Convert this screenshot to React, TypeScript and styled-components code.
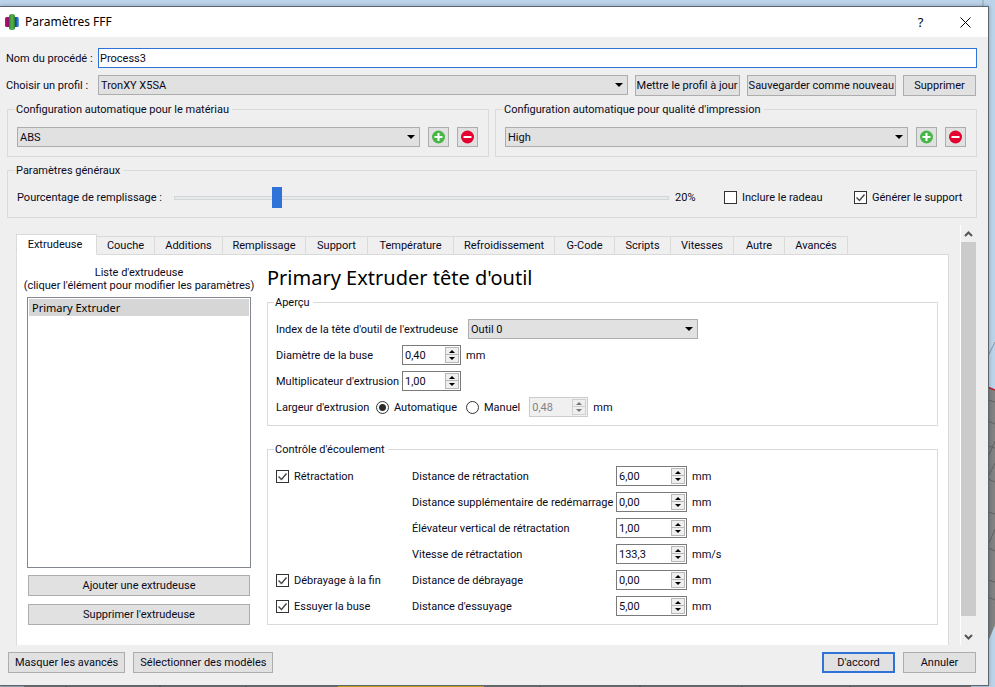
import React, { useEffect, useRef, useState } from "react";
import styled, { createGlobalStyle, css } from "styled-components";

const color = {
  face: "#efefef",
  button: "#e1e1e1",
  edge: "#adadad",
  groove: "#dadada",
  accent: "#2f73d8",
  field: "#7a7a7a",
  text: "#0a0a1c",
};

const uiFont = `Roboto, "Liberation Sans", sans-serif`;
const titleFont = `"Noto Sans", "Open Sans", sans-serif`;

const GlobalStyle = createGlobalStyle`
  *, *::before, *::after { box-sizing: border-box; }
  body {
    margin: 0;
    background: #b9d1e6;
    color: ${color.text};
    font: 11px/13px ${uiFont};
  }
  button, input, select { font: inherit; color: inherit; margin: 0; }
`;

/* ---------- Window frame ---------- */

const Desktop = styled.div`
  position: relative;
  display: flex;
  min-height: 100vh;
  padding: 6px 6px 1px 0;
`;

const Scene = styled.svg`
  position: absolute;
  inset: 0;
  width: 100%;
  height: 100%;
`;

const Dialog = styled.main`
  position: relative;
  flex: 1;
  min-width: 0;
  display: flex;
  flex-direction: column;
  background: ${color.face};
  border: 1px solid #5b666e;
  border-left: 0;
  box-shadow: 0 0 4px rgba(0, 10, 30, 0.3);
`;

const TitleBar = styled.header`
  display: flex;
  align-items: center;
  height: 30px;
  padding-left: 5px;
  background: #fff;
`;

const Title = styled.h1`
  flex: 1;
  margin: 0 0 0 6px;
  color: #000;
  font: 400 12px/16px ${titleFont};
`;

const CaptionButton = styled.button`
  display: grid;
  place-items: center;
  width: 45px;
  height: 30px;
  padding: 0;
  border: 0;
  background: none;
  color: #000;
`;

const Body = styled.div`
  flex: 1;
  display: flex;
  flex-direction: column;
  gap: 7px;
  padding: 11px 11px 12px 6px;
`;

/* ---------- Shared controls ---------- */

const Button = styled.button<{ $primary?: boolean; $wide?: boolean }>`
  min-width: 73px;
  height: 21px;
  padding: 0 ${(p) => (p.$wide ? 6 : 1)}px;
  border: 1px solid ${color.edge};
  background: ${color.button};
  white-space: nowrap;
  ${(p) =>
    p.$primary &&
    css`
      border: 2px solid ${color.accent};
    `}
`;

const IconButton = styled.button`
  display: grid;
  place-items: center;
  flex: none;
  width: 21px;
  height: 20px;
  padding: 0;
  border: 1px solid ${color.edge};
  background: ${color.button};
`;

const SelectBox = styled.div`
  position: relative;
  flex: 1;
  min-width: 0;

  svg {
    position: absolute;
    top: 8px;
    right: 5px;
    pointer-events: none;
  }
`;

const SelectInput = styled.select`
  display: block;
  width: 100%;
  height: 20px;
  padding: 0 20px 0 2px;
  appearance: none;
  border: 1px solid ${color.edge};
  border-radius: 0;
  background: ${color.button};
`;

const TextInput = styled.input`
  flex: 1;
  min-width: 0;
  height: 20px;
  padding: 0 1px;
  border: 1px solid ${color.accent};
  background: #fff;
  outline: none;
`;

const Row = styled.div<{ $gap?: number }>`
  display: flex;
  align-items: center;
  gap: ${(p) => p.$gap ?? 7}px;
`;

const ProfileControls = styled.div`
  display: flex;
  gap: 7px;
  padding-right: 1px;
`;

const FormRow = styled.div`
  display: grid;
  grid-template-columns: 92px minmax(0, 1fr);
  align-items: center;
`;

const Group = styled.fieldset`
  min-width: 0;
  margin: 0;
  padding: 10px 10px 9px 9px;
  border: 1px solid ${color.groove};
`;

const Legend = styled.legend`
  margin-left: -2px;
  padding: 0 3px 0 1px;
  white-space: nowrap;
`;

const SplitRow = styled.div`
  display: grid;
  grid-template-columns: 1fr 1fr;
  gap: 6px;
  padding-left: 1px;
`;

const Indented = styled.div`
  padding-left: 1px;
`;

const PresetRow = styled.div`
  display: flex;
  gap: 8px;
  padding-top: 1px;
`;

const CheckLabel = styled.label`
  display: flex;
  align-items: center;
  gap: 5px;
  white-space: nowrap;
`;

const tick = `url("data:image/svg+xml,%3Csvg xmlns='http://www.w3.org/2000/svg' width='11' height='11'%3E%3Cpath d='M1.5 5.5l3 3 5-6' fill='none' stroke='%23444' stroke-width='1.4'/%3E%3C/svg%3E")`;

const CheckInput = styled.input.attrs({ type: "checkbox" })`
  appearance: none;
  flex: none;
  width: 13px;
  height: 13px;
  border: 1px solid #333;
  background: #fff;

  &:checked {
    background: #fff ${tick} center no-repeat;
  }
`;

const RadioInput = styled.input.attrs({ type: "radio" })`
  appearance: none;
  flex: none;
  width: 13px;
  height: 13px;
  border: 1px solid #333;
  border-radius: 50%;
  background: #fff;

  &:checked {
    background: radial-gradient(circle, #2b2b2b 3px, #fff 4px);
  }
`;

/* ---------- Infill slider ---------- */

const GeneralRow = styled.div`
  display: grid;
  grid-template-columns: 157px minmax(0, 1fr) 55px 130px 112px;
  align-items: center;
  height: 21px;
  white-space: nowrap;
`;

const Slider = styled.input.attrs({ type: "range" })`
  width: 100%;
  height: 21px;
  appearance: none;
  background: transparent;

  &::-webkit-slider-runnable-track {
    height: 4px;
    border: 1px solid #d3d6d6;
    background: #e7eaea;
  }

  &::-webkit-slider-thumb {
    appearance: none;
    width: 10px;
    height: 21px;
    margin-top: -10px;
    background: ${color.accent};
  }
`;

const Percent = styled.output`
  padding-left: 6px;
`;

/* ---------- Tabs and scroll area ---------- */

const ScrollArea = styled.div`
  flex: 1;
  display: grid;
  grid-template-columns: minmax(0, 1fr) 11px 16px;
  padding: 0 1px 0 10px;
`;

const TabView = styled.div`
  display: flex;
  flex-direction: column;
  padding-top: 9px;
`;

const TabList = styled.div`
  display: flex;
  align-items: flex-end;
  height: 21px;
  margin-bottom: -1px;
  z-index: 1;
`;

const Tab = styled.button<{ $active?: boolean; $width: number }>`
  flex: 0 1 ${(p) => p.$width}px;
  height: 19px;
  padding: 0;
  border: 1px solid ${color.groove};
  border-left: 0;
  background: ${color.face};
  white-space: nowrap;
  ${(p) =>
    p.$active &&
    css`
      height: 21px;
      padding: 0 3px 1px 0;
      border-left: 1px solid ${color.groove};
      border-bottom-color: #fff;
      background: #fff;
    `}
`;

const TabPanel = styled.div`
  flex: 1;
  display: grid;
  grid-template-columns: 224px minmax(0, 1fr);
  gap: 16px;
  padding: 11px 10px 20px 10px;
  border: 1px solid ${color.groove};
  border-bottom: 0;
  background: #fff;
`;

const ScrollBar = styled.div`
  grid-column: 3;
  display: flex;
  flex-direction: column;
  border-left: 1px solid #fff;
`;

const ScrollArrow = styled.button`
  display: grid;
  place-items: center;
  height: 17px;
  padding: 0;
  border: 0;
  background: none;
`;

const ScrollThumb = styled.div`
  flex: 1;
  margin-bottom: 12px;
  background: #cbcbcb;
`;

/* ---------- Extruder list ---------- */

const ListColumn = styled.section`
  display: flex;
  flex-direction: column;
`;

const ListCaption = styled.div`
  display: flex;
  flex-direction: column;
  align-items: center;
  margin-bottom: 5px;
  white-space: nowrap;
`;

const ListBox = styled.ul`
  flex: 1;
  margin: 0 0 7px;
  padding: 1px;
  border: 1px solid #828790;
  background: #fff;
  list-style: none;
`;

const ListItem = styled.li`
  height: 17px;
  padding-left: 3px;
  background: #d6d6d6;
  color: #000;
  font: 11px/17px ${titleFont};
`;

const ListButtons = styled.div`
  display: grid;
  gap: 8px;
  padding: 0 1px;
`;

/* ---------- Extruder details ---------- */

const Details = styled.section`
  display: flex;
  flex-direction: column;
`;

const ToolTitle = styled.h2`
  margin: 0 0 6px;
  color: #000;
  font: 400 20px/24px ${titleFont};
`;

const OverviewGroup = styled(Group)`
  padding: 10px 8px 8px;
  margin-bottom: 17px;
`;

const FlowGroup = styled(Group)`
  padding: 10px 8px 8px;
`;

const Stack = styled.div`
  display: grid;
  gap: 6px;
`;

const Field = styled.div<{ $label?: number }>`
  display: grid;
  grid-template-columns: ${(p) => p.$label ?? 126}px minmax(0, 1fr);
  align-items: center;
  height: 20px;
  white-space: nowrap;
`;

const WidthRow = styled.div`
  display: flex;
  align-items: center;
  gap: 9px;
  height: 20px;
  white-space: nowrap;
`;

const ToolSelect = styled.div`
  display: flex;
  max-width: 230px;
`;

const FlowRow = styled.div`
  display: grid;
  grid-template-columns: 136px 204px minmax(0, 1fr);
  align-items: center;
  height: 20px;
  white-space: nowrap;
`;

const SpinBox = styled.span<{ $width: number; $disabled?: boolean }>`
  display: flex;
  width: ${(p) => p.$width}px;
  height: 20px;
  padding: 1px;
  border: 1px solid ${(p) => (p.$disabled ? "#cccccc" : color.field)};
  background: ${(p) => (p.$disabled ? "#f0f0f0" : "#fff")};
  color: ${(p) => (p.$disabled ? "#838383" : color.text)};
`;

const SpinInput = styled.input`
  flex: 1;
  min-width: 0;
  padding: 0 1px;
  border: 0;
  background: transparent;
  outline: none;
`;

const SpinButtons = styled.span`
  display: grid;
  grid-template-rows: 1fr 1fr;
  width: 14px;
`;

const SpinButton = styled.button`
  display: grid;
  place-items: center;
  padding: 0;
  border: 1px solid #b8b8b8;
  background: #efefef;

  & + & {
    border-top: 0;
  }

  &:disabled {
    border-color: #d0d0d0;
  }
`;

/* ---------- Footer ---------- */

const Footer = styled.footer`
  display: flex;
  gap: 8px;
  padding-left: 2px;
  padding-right: 1px;
`;

const Spacer = styled.span`
  flex: 1;
`;

/* ---------- Icons ---------- */

const Logo = () => (
  <svg width="14" height="16" viewBox="0 0 14 16" aria-hidden="true">
    <defs>
      <linearGradient id="logoLeft" x2="1">
        <stop offset="0" stopColor="#e0006c" />
        <stop offset="1" stopColor="#54206e" />
      </linearGradient>
      <linearGradient id="logoRight" x2="1">
        <stop offset="0" stopColor="#172a68" />
        <stop offset="0.6" stopColor="#2560b8" />
        <stop offset="1" stopColor="#74b4e8" />
      </linearGradient>
      <linearGradient id="logoMid" x2="1">
        <stop offset="0" stopColor="#2f7d32" />
        <stop offset="0.5" stopColor="#58b848" />
        <stop offset="1" stopColor="#2b7f34" />
      </linearGradient>
    </defs>
    <rect x="0" y="3" width="5" height="10" rx="1.5" fill="url(#logoLeft)" />
    <rect x="9" y="3" width="5" height="10" rx="1.5" fill="url(#logoRight)" />
    <rect x="4" y="0" width="6" height="16" rx="2.5" fill="url(#logoMid)" />
  </svg>
);

const CloseIcon = () => (
  <svg width="11" height="11" aria-hidden="true">
    <path d="M.5.5l10 10M10.5.5l-10 10" stroke="#000" strokeWidth="1" />
  </svg>
);

const HelpIcon = styled.span`
  font: 13px/16px ${titleFont};
`;

const DropArrow = () => (
  <svg width="8" height="4" aria-hidden="true">
    <path d="M0 0h8L4 4z" fill="#000" />
  </svg>
);

const SpinArrow = ({ down, muted }: { down?: boolean; muted?: boolean }) => (
  <svg width="6" height="3" aria-hidden="true">
    <path d={down ? "M0 0h6L3 3z" : "M0 3h6L3 0z"} fill={muted ? "#777" : "#000"} />
  </svg>
);

const SignIcon = ({ add }: { add?: boolean }) => (
  <svg width="13" height="14" viewBox="0 0 13 14" aria-hidden="true">
    <circle cx="6.5" cy="7" r="6.5" fill={add ? "#48b748" : "#e4032e"} />
    <path d={add ? "M2.5 7h8M6.5 3v8" : "M2.5 7h8"} stroke="#fff" strokeWidth="2" />
  </svg>
);

const Chevron = ({ down }: { down?: boolean }) => (
  <svg width="9" height="6" aria-hidden="true">
    <path
      d={down ? "M1 1l3.5 3.5L8 1" : "M1 5l3.5-3.5L8 5"}
      fill="none"
      stroke="#555"
      strokeWidth="2"
    />
  </svg>
);

const PrintBed = () => (
  <Scene viewBox="0 0 995 687" preserveAspectRatio="none" aria-hidden="true">
    <rect width="995" height="687" fill="#bcd4ea" />
    <path d="M983 0v6" stroke="#8fa3b3" />
    <path d="M988 356l7-14" stroke="#8b979f" />
    <path d="M985 386l10 4V625l-10 24z" fill="#828282" />
    <path d="M985 386l10 4" stroke="#d0142c" strokeWidth="1.5" />
    <path
      d="M988 400l7 2M988 421l7 3M988 446l7 2M988 479l7 3M988 512l7 2M988 548l7 3M988 580l7 2M988 597l7 3M989 455l6-14M989 543l6-14M989 475l6-12"
      stroke="#636363"
    />
    <rect y="684" width="24" height="3" fill="#9fb0b8" />
    <rect x="24" y="684" width="947" height="3" fill="#777" />
    <path d="M66 684v3M160 684v3M246 684v3M540 684v3M640 684v3M742 684v3M850 684v3" stroke="#505050" />
    <rect x="338" y="684" width="146" height="3" fill="#e0b020" />
  </Scene>
);

/* ---------- Composite controls ---------- */

type SelectProps = { id?: string; label?: string; options: string[] };

const Select = ({ id, label, options }: SelectProps) => (
  <SelectBox>
    <SelectInput id={id} aria-label={label}>
      {options.map((o) => (
        <option key={o}>{o}</option>
      ))}
    </SelectInput>
    <DropArrow />
  </SelectBox>
);

type SpinProps = { id: string; value: string; width: number; label?: string; disabled?: boolean };

const Spin = ({ id, value, width, label, disabled }: SpinProps) => (
  <SpinBox $width={width} $disabled={disabled}>
    <SpinInput id={id} aria-label={label} defaultValue={value} disabled={disabled} />
    <SpinButtons>
      <SpinButton type="button" aria-label="Augmenter" disabled={disabled}>
        <SpinArrow muted={disabled} />
      </SpinButton>
      <SpinButton type="button" aria-label="Diminuer" disabled={disabled}>
        <SpinArrow down muted={disabled} />
      </SpinButton>
    </SpinButtons>
  </SpinBox>
);

const Check = ({ text, checked }: { text: string; checked?: boolean }) => (
  <CheckLabel>
    <CheckInput defaultChecked={checked} />
    {text}
  </CheckLabel>
);

const PresetGroup = ({ legend, value }: { legend: string; value: string }) => (
  <Group>
    <Legend>{legend}</Legend>
    <PresetRow>
      <Select label={legend} options={[value]} />
      <IconButton type="button" aria-label="Ajouter">
        <SignIcon add />
      </IconButton>
      <IconButton type="button" aria-label="Retirer">
        <SignIcon />
      </IconButton>
    </PresetRow>
  </Group>
);

/* ---------- Data ---------- */

const tabs: [string, number][] = [
  ["Extrudeuse", 81],
  ["Couche", 58],
  ["Additions", 68],
  ["Remplissage", 83],
  ["Support", 62],
  ["Température", 86],
  ["Refroidissement", 101],
  ["G-Code", 60],
  ["Scripts", 56],
  ["Vitesses", 63],
  ["Autre", 51],
  ["Avancés", 63],
];

type FlowSetting = { id: string; toggle?: string; label: string; value: string; unit: string };

const flowSettings: FlowSetting[] = [
  { id: "retract", toggle: "Rétractation", label: "Distance de rétractation", value: "6,00", unit: "mm" },
  { id: "restart", label: "Distance supplémentaire de redémarrage", value: "0,00", unit: "mm" },
  { id: "lift", label: "Élévateur vertical de rétractation", value: "1,00", unit: "mm" },
  { id: "speed", label: "Vitesse de rétractation", value: "133,3", unit: "mm/s" },
  { id: "coast", toggle: "Débrayage à la fin", label: "Distance de débrayage", value: "0,00", unit: "mm" },
  { id: "wipe", toggle: "Essuyer la buse", label: "Distance d'essuyage", value: "5,00", unit: "mm" },
];

export default function App() {
  const nameRef = useRef<HTMLInputElement>(null);
  const [infill, setInfill] = useState(20);
  const [activeTab, setActiveTab] = useState("Extrudeuse");

  useEffect(() => {
    const input = nameRef.current;
    if (!input) return;
    input.focus();
    input.setSelectionRange(input.value.length, input.value.length);
  }, []);

  return (
    <Desktop>
      <GlobalStyle />
      <PrintBed />
      <Dialog>
        <TitleBar>
          <Logo />
          <Title>Paramètres FFF</Title>
          <CaptionButton type="button" aria-label="Aide">
            <HelpIcon>?</HelpIcon>
          </CaptionButton>
          <CaptionButton type="button" aria-label="Fermer">
            <CloseIcon />
          </CaptionButton>
        </TitleBar>

        <Body>
          <FormRow>
            <label htmlFor="process">Nom du procédé :</label>
            <TextInput id="process" ref={nameRef} defaultValue="Process3" spellCheck={false} />
          </FormRow>

          <FormRow>
            <label htmlFor="profile">Choisir un profil :</label>
            <ProfileControls>
              <Select id="profile" options={["TronXY X5SA"]} />
              <Button type="button">Mettre le profil à jour</Button>
              <Button type="button">Sauvegarder comme nouveau</Button>
              <Button type="button">Supprimer</Button>
            </ProfileControls>
          </FormRow>

          <SplitRow>
            <PresetGroup legend="Configuration automatique pour le matériau" value="ABS" />
            <PresetGroup legend="Configuration automatique pour qualité d'impression" value="High" />
          </SplitRow>

          <Indented>
            <Group>
              <Legend>Paramètres généraux</Legend>
              <GeneralRow>
                <label htmlFor="infill">Pourcentage de remplissage :</label>
                <Slider
                  id="infill"
                  min={0}
                  max={100}
                  value={infill}
                  onChange={(e) => setInfill(Number(e.target.value))}
                />
                <Percent htmlFor="infill">{infill}%</Percent>
                <Check text="Inclure le radeau" />
                <Check text="Générer le support" checked />
              </GeneralRow>
            </Group>
          </Indented>

          <ScrollArea>
            <TabView>
              <TabList role="tablist">
                {tabs.map(([name, width]) => (
                  <Tab
                    key={name}
                    type="button"
                    role="tab"
                    aria-selected={name === activeTab}
                    $active={name === activeTab}
                    $width={width}
                    onClick={() => setActiveTab(name)}
                  >
                    {name}
                  </Tab>
                ))}
              </TabList>

              <TabPanel role="tabpanel">
                <ListColumn>
                  <ListCaption>
                    <span>Liste d'extrudeuse</span>
                    <span>(cliquer l'élément pour modifier les paramètres)</span>
                  </ListCaption>
                  <ListBox>
                    <ListItem>Primary Extruder</ListItem>
                  </ListBox>
                  <ListButtons>
                    <Button type="button">Ajouter une extrudeuse</Button>
                    <Button type="button">Supprimer l'extrudeuse</Button>
                  </ListButtons>
                </ListColumn>

                <Details>
                  <ToolTitle>Primary Extruder tête d'outil</ToolTitle>

                  <OverviewGroup>
                    <Legend>Aperçu</Legend>
                    <Stack>
                      <Field $label={192}>
                        <label htmlFor="tool">Index de la tête d'outil de l'extrudeuse</label>
                        <ToolSelect>
                          <Select id="tool" options={["Outil 0"]} />
                        </ToolSelect>
                      </Field>
                      <Field>
                        <label htmlFor="nozzle">Diamètre de la buse</label>
                        <Row $gap={5}>
                          <Spin id="nozzle" value="0,40" width={59} />
                          mm
                        </Row>
                      </Field>
                      <Field>
                        <label htmlFor="multiplier">Multiplicateur d'extrusion</label>
                        <Spin id="multiplier" value="1,00" width={59} />
                      </Field>
                      <Field $label={100}>
                        <span>Largeur d'extrusion</span>
                        <WidthRow>
                          <CheckLabel>
                            <RadioInput name="width" defaultChecked />
                            Automatique
                          </CheckLabel>
                          <CheckLabel>
                            <RadioInput name="width" />
                            Manuel
                          </CheckLabel>
                          <Row $gap={5}>
                            <Spin id="width" label="Largeur d'extrusion" value="0,48" width={59} disabled />
                            mm
                          </Row>
                        </WidthRow>
                      </Field>
                    </Stack>
                  </OverviewGroup>

                  <FlowGroup>
                    <Legend>Contrôle d'écoulement</Legend>
                    <Stack>
                      {flowSettings.map((s) => (
                        <FlowRow key={s.id}>
                          {s.toggle ? <Check text={s.toggle} checked /> : <span />}
                          <label htmlFor={s.id}>{s.label}</label>
                          <Row $gap={5}>
                            <Spin id={s.id} value={s.value} width={71} />
                            {s.unit}
                          </Row>
                        </FlowRow>
                      ))}
                    </Stack>
                  </FlowGroup>
                </Details>
              </TabPanel>
            </TabView>

            <ScrollBar>
              <ScrollArrow type="button" aria-label="Défiler vers le haut">
                <Chevron />
              </ScrollArrow>
              <ScrollThumb />
              <ScrollArrow type="button" aria-label="Défiler vers le bas">
                <Chevron down />
              </ScrollArrow>
            </ScrollBar>
          </ScrollArea>

          <Footer>
            <Button type="button" $wide>Masquer les avancés</Button>
            <Button type="button" $wide>Sélectionner des modèles</Button>
            <Spacer />
            <Button type="button" $primary>D'accord</Button>
            <Button type="button">Annuler</Button>
          </Footer>
        </Body>
      </Dialog>
    </Desktop>
  );
}
